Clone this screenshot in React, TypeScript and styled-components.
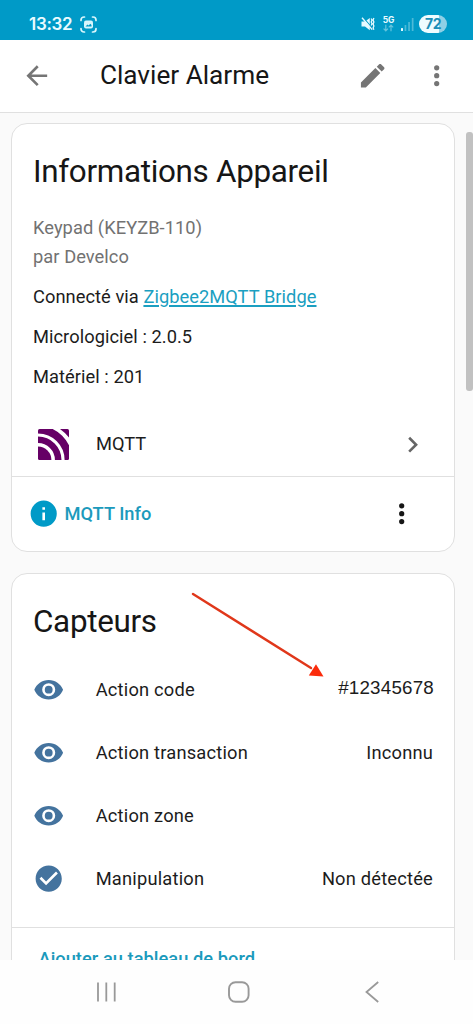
import React from 'react';
import styled, { createGlobalStyle } from 'styled-components';

const GlobalStyle = createGlobalStyle`
  * { box-sizing: border-box; }
  body {
    margin: 0;
    background: #fafafa;
    color: #1c1c1c;
    font-family: Roboto, 'Liberation Sans', sans-serif;
    font-size: 18.3px;
  }
`;

const Screen = styled.div`
  display: flex;
  flex-direction: column;
  width: 473px;
  height: 1024px;
  overflow: hidden;
`;

const StatusBar = styled.div`
  display: flex;
  align-items: center;
  flex: none;
  height: 40px;
  padding: 8px 26px 0 29px;
  background: #009ac7;
  color: #e9fbff;
`;

const Clock = styled.span`
  width: 51px;
  font: 600 17px/20px Inter, sans-serif;
  letter-spacing: -0.3px;
`;

const StatusIcons = styled.div`
  display: flex;
  align-items: center;
  margin-left: auto;
`;

const Network = styled.div`
  display: flex;
  flex-direction: column;
  align-items: center;
  width: 13px;
  margin: 0 6px 0 7.5px;
  font: 700 8.5px/8px Inter, sans-serif;
  letter-spacing: -0.1px;
`;

const Battery = styled.div<{ $level: number }>`
  width: 28px;
  height: 18px;
  margin-left: 5px;
  border-radius: 9px;
  background: linear-gradient(90deg, #effcff ${(p) => p.$level}%, #8fd0e6 ${(p) => p.$level}%);
  color: #1c8fb8;
  text-align: center;
  font: 700 14px/18px Inter, sans-serif;
  letter-spacing: -0.5px;
`;

const AppBar = styled.header`
  display: flex;
  align-items: center;
  flex: none;
  height: 73px;
  padding: 0 21px;
  border-bottom: 1px solid #e0e0e0;
  background: #fff;
  color: #757575;
`;

const PageTitle = styled.h1`
  flex: 1;
  margin: -2px 0 0 47.5px;
  color: #161616;
  font-size: 26.2px;
  font-weight: 400;
  line-height: 32px;
`;

const Content = styled.main`
  position: relative;
  display: flex;
  flex-direction: column;
  gap: 21px;
  flex: 1;
  min-height: 0;
  padding: 10px 18px 0 11px;
  overflow: hidden;
  background: #fafafa;
`;

const ScrollThumb = styled.div`
  position: absolute;
  top: 19px;
  right: 0;
  width: 7px;
  height: 259px;
  border-radius: 3px;
  background: #c1c1c1;
`;

const Card = styled.section<{ $height: number }>`
  flex: none;
  height: ${(p) => p.$height}px;
  border: 1px solid #e0e0e0;
  border-radius: 16px;
  background: #fff;
`;

const CardTitle = styled.h2`
  margin: 0;
  padding: 28px 21px 0;
  color: #161616;
  font-size: 31.4px;
  font-weight: 400;
  line-height: 39px;
  letter-spacing: -0.01em;
`;

const Details = styled.div`
  display: flex;
  flex-direction: column;
  gap: 11px;
  padding: 22px 21px 0;
  line-height: 29px;
  letter-spacing: 0.05px;
`;

const Model = styled.div`
  color: #727272;
`;

const Link = styled.a`
  color: #1b9fc1;
  text-decoration: underline;
  text-decoration-thickness: 1.5px;
  text-underline-offset: 2px;
`;

const Row = styled.div`
  display: flex;
  align-items: center;
  height: 63px;
  padding: 0 21px;
`;

const IntegrationRow = styled(Row)`
  margin-top: 22px;
`;

const RowLabel = styled.span<{ $spaced?: boolean }>`
  flex: 1;
  margin-left: ${(p) => (p.$spaced ? 31.3 : 32)}px;
  padding-bottom: ${(p) => (p.$spaced ? 0 : 2)}px;
  letter-spacing: ${(p) => (p.$spaced ? 0.2 : 0)}px;
`;

const RowValue = styled.span<{ $edited?: boolean }>`
  letter-spacing: 0.2px;
  ${(p) => p.$edited && `
    margin-right: -1px;
    padding-bottom: 3px;
    font-family: 'Liberation Sans', Arial, sans-serif;
    font-size: 18.8px;
  `}
`;

const CardActions = styled.div`
  display: flex;
  align-items: center;
  height: 75px;
  padding: 0 37px 0 15.5px;
  border-top: 1px solid #e0e0e0;
  color: #161616;
`;

const ActionLabel = styled.span`
  flex: 1;
  margin-left: 5.5px;
  padding-bottom: 2px;
  color: #1b9abc;
  font-weight: 500;
`;

const InfoIcon = styled.span`
  display: flex;
  color: #009ac7;
`;

const Sensors = styled.div`
  padding: 17px 0 16.5px;
`;

const SensorIcon = styled.span`
  display: flex;
  color: #44739e;
`;

const AddButton = styled.div`
  padding: 15px 26.5px;
  border-top: 1px solid #e0e0e0;
  color: #1b9abc;
  font-weight: 500;
  line-height: 31px;
  letter-spacing: 0.03px;
`;

const ArrowOverlay = styled.svg`
  position: absolute;
  left: 190px;
  top: 478px;
`;

const NavBar = styled.nav`
  display: flex;
  align-items: center;
  flex: none;
  height: 64px;
  padding-left: 95.5px;
  background: #fefefe;
`;

const HomeButton = styled.span`
  display: flex;
  margin: 0 115px 0 111px;
`;

const paths = {
  back: 'M20,11V13H8L13.5,18.5L12.08,19.92L4.16,12L12.08,4.08L13.5,5.5L8,11H20Z',
  pencil:
    'M20.71,7.04C21.1,6.65 21.1,6 20.71,5.63L18.37,3.29C18,2.9 17.35,2.9 16.96,3.29L15.12,5.12L18.87,8.87M3,17.25V21H6.75L17.81,9.93L14.06,6.18L3,17.25Z',
  dots: 'M12,16A2,2 0 0,1 14,18A2,2 0 0,1 12,20A2,2 0 0,1 10,18A2,2 0 0,1 12,16M12,10A2,2 0 0,1 14,12A2,2 0 0,1 12,14A2,2 0 0,1 10,12A2,2 0 0,1 12,10M12,4A2,2 0 0,1 14,6A2,2 0 0,1 12,8A2,2 0 0,1 10,6A2,2 0 0,1 12,4Z',
  chevron: 'M8.59,16.58L13.17,12L8.59,7.41L10,6L16,12L10,18L8.59,16.58Z',
  info: 'M13,9H11V7H13M13,17H11V11H13M12,2A10,10 0 0,0 2,12A10,10 0 0,0 12,22A10,10 0 0,0 22,12A10,10 0 0,0 12,2Z',
  eye: 'M12,9A3,3 0 0,0 9,12A3,3 0 0,0 12,15A3,3 0 0,0 15,12A3,3 0 0,0 12,9M12,17A5,5 0 0,1 7,12A5,5 0 0,1 12,7A5,5 0 0,1 17,12A5,5 0 0,1 12,17M12,4.5C7,4.5 2.73,7.61 1,12C2.73,16.39 7,19.5 12,19.5C17,19.5 21.27,16.39 23,12C21.27,7.61 17,4.5 12,4.5Z',
  check:
    'M12 2C6.5 2 2 6.5 2 12S6.5 22 12 22 22 17.5 22 12 17.5 2 12 2M10 17L5 12L6.41 10.59L10 14.17L17.59 6.58L19 8L10 17Z',
};

const IconSvg = styled.svg`
  flex: none;
  width: 31.4px;
  height: 31.4px;
  fill: currentColor;
`;

const PencilSlot = styled.span`
  display: flex;
  margin-right: 32px;
`;

const ChevronSlot = styled.span`
  display: flex;
  margin-right: 5px;
  color: #666;
`;

function Icon({ name }: { name: keyof typeof paths }) {
  return (
    <IconSvg viewBox="0 0 24 24">
      <path d={paths[name]} />
    </IconSvg>
  );
}

const LogoSlot = styled.span`
  display: flex;
  width: 31px;
  margin: 0 -5px 0 5px;
`;

function MqttLogo() {
  return (
    <LogoSlot>
      <svg width="31" height="31" viewBox="0 0 31 31">
        <clipPath id="mqtt">
          <rect width="31" height="31" rx="1.5" />
        </clipPath>
        <g clipPath="url(#mqtt)" fill="none" stroke="#660066">
          <circle cx="0" cy="31" r="13.4" fill="#660066" stroke="none" />
          <circle cx="0" cy="31" r="20.2" strokeWidth="6.6" />
          <circle cx="0" cy="31" r="30.4" strokeWidth="7.6" />
          <path d="M22 0H31V8.5Q27 3.5 22 0Z" fill="#660066" stroke="none" />
        </g>
      </svg>
    </LogoSlot>
  );
}

const sensors: { icon: 'eye' | 'check'; label: string; value: string; edited?: boolean }[] = [
  { icon: 'eye', label: 'Action code', value: '#12345678', edited: true },
  { icon: 'eye', label: 'Action transaction', value: 'Inconnu' },
  { icon: 'eye', label: 'Action zone', value: '' },
  { icon: 'check', label: 'Manipulation', value: 'Non détectée' },
];

export default function App() {
  return (
    <Screen>
      <GlobalStyle />
      <StatusBar>
        <Clock>13:32</Clock>
        <svg width="17" height="17" viewBox="0 0 17 17" fill="none" stroke="#d8f6fc" strokeWidth="1.7" strokeLinecap="round">
          <path d="M1 4.5V4A3 3 0 0 1 4 1H4.5M12.5 1H13A3 3 0 0 1 16 4V4.5M16 12.5V13A3 3 0 0 1 13 16H12.5M4.5 16H4A3 3 0 0 1 1 13V12.5" />
          <rect x="4" y="4.5" width="9" height="8" rx="2" fill="#d8f6fc" stroke="none" />
          <path d="M5.5 10.5L7.5 8.5L8.6 9.5L10.3 7.8L11.5 9V10.5Z" fill="#009ac7" stroke="none" />
        </svg>
        <StatusIcons>
          <svg width="14" height="14" viewBox="0 0 14 14" fill="#e6faff">
            <path d="M0.5 4.5H4L8.8 1V13.2L4 9.6H0.5Z" />
            <path d="M2.2 0.6L12 11.8" stroke="#009ac7" strokeWidth="1.2" />
            <path d="M1 0.8L11.2 12.6" stroke="#e6faff" strokeWidth="1.4" />
            <path d="M10.2 1.5L11 3.2L10.2 5L11 6.8L10.2 8.5M12.9 1L12.1 3L12.9 5L12.1 7L12.9 9L12.1 11L12.9 12.8" fill="none" stroke="#e6faff" strokeWidth="1.3" />
          </svg>
          <Network>
            5G
            <svg width="11" height="8" viewBox="0 0 11 8" fill="none" stroke="#62c3dd" strokeWidth="1.2">
              <path d="M2.8 0.8V7M0.6 4.7L2.8 7L5 4.7M8 7.3V1M5.8 3.3L8 1L10.2 3.3" />
            </svg>
          </Network>
          <svg width="13" height="13" viewBox="0 0 13 13">
            <rect x="0" y="10" width="2" height="3" rx="0.5" fill="#e6faff" />
            <rect x="3.6" y="7" width="1.7" height="6" fill="#4dbad8" />
            <rect x="7.2" y="4" width="1.7" height="9" fill="#4dbad8" />
            <rect x="10.8" y="0" width="1.7" height="13" fill="#4dbad8" />
          </svg>
          <Battery $level={72}>72</Battery>
        </StatusIcons>
      </StatusBar>

      <AppBar>
        <Icon name="back" />
        <PageTitle>Clavier Alarme</PageTitle>
        <PencilSlot>
          <Icon name="pencil" />
        </PencilSlot>
        <Icon name="dots" />
      </AppBar>

      <Content>
        <Card $height={429}>
          <CardTitle>Informations Appareil</CardTitle>
          <Details>
            <Model>
              Keypad (KEYZB-110)
              <br />
              par Develco
            </Model>
            <div>
              Connecté via <Link>Zigbee2MQTT Bridge</Link>
            </div>
            <div>Micrologiciel : 2.0.5</div>
            <div>Matériel : 201</div>
          </Details>
          <IntegrationRow>
            <MqttLogo />
            <RowLabel>MQTT</RowLabel>
            <ChevronSlot>
              <Icon name="chevron" />
            </ChevronSlot>
          </IntegrationRow>
          <CardActions>
            <InfoIcon>
              <Icon name="info" />
            </InfoIcon>
            <ActionLabel>MQTT Info</ActionLabel>
            <Icon name="dots" />
          </CardActions>
        </Card>

        <Card $height={430}>
          <CardTitle>Capteurs</CardTitle>
          <Sensors>
            {sensors.map((s) => (
              <Row key={s.label}>
                <SensorIcon>
                  <Icon name={s.icon} />
                </SensorIcon>
                <RowLabel $spaced>{s.label}</RowLabel>
                <RowValue $edited={s.edited}>{s.value}</RowValue>
              </Row>
            ))}
          </Sensors>
          <AddButton>Ajouter au tableau de bord</AddButton>
        </Card>

        <ScrollThumb />
        <ArrowOverlay width="136" height="90" viewBox="0 0 136 90">
          <path d="M3 3L121 77" stroke="#e0371a" strokeWidth="2.4" strokeLinecap="round" />
          <path d="M133.5 85.5L118.8 84.5L126 73.2Z" fill="#fb2b0b" />
        </ArrowOverlay>
      </Content>

      <NavBar>
        <svg width="21" height="22" viewBox="0 0 21 22" stroke="#999" strokeWidth="1.8">
          <path d="M2 1.5V20.5M10.3 1.5V20.5M18.7 1.5V20.5" />
        </svg>
        <HomeButton>
          <svg width="22" height="22" viewBox="0 0 22 22" fill="none" stroke="#999" strokeWidth="1.9">
            <rect x="1" y="1.2" width="19.6" height="19.6" rx="6.5" />
          </svg>
        </HomeButton>
        <svg width="15" height="22" viewBox="0 0 15 22" fill="none" stroke="#999" strokeWidth="1.8">
          <path d="M13.2 1L1.5 11L13.2 21" />
        </svg>
      </NavBar>
    </Screen>
  );
}
